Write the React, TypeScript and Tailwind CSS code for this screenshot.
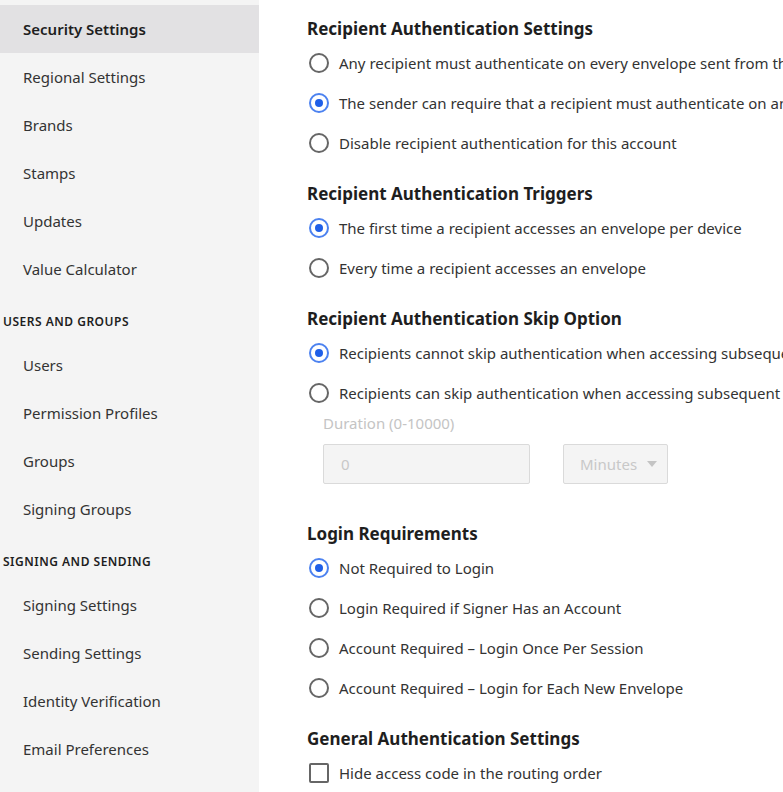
import React from 'react';

type NavEntry = { label: string; header?: boolean; active?: boolean };

const nav: NavEntry[] = [
  { label: 'Security Settings', active: true },
  { label: 'Regional Settings' },
  { label: 'Brands' },
  { label: 'Stamps' },
  { label: 'Updates' },
  { label: 'Value Calculator' },
  { label: 'USERS AND GROUPS', header: true },
  { label: 'Users' },
  { label: 'Permission Profiles' },
  { label: 'Groups' },
  { label: 'Signing Groups' },
  { label: 'SIGNING AND SENDING', header: true },
  { label: 'Signing Settings' },
  { label: 'Sending Settings' },
  { label: 'Identity Verification' },
  { label: 'Email Preferences' },
  { label: 'Security Transfer' },
];

const Radio: React.FC<{ checked?: boolean; label: string }> = ({ checked, label }) => (
  <div className="flex items-center h-10">
    <span
      className={
        checked
          ? 'ml-[2px] w-5 h-5 rounded-full border-2 border-[#4c82f0] flex items-center justify-center shrink-0'
          : 'ml-[2px] w-5 h-5 rounded-full border-2 border-[#666666] shrink-0'
      }
    >
      {checked && <span className="w-2 h-2 rounded-full bg-[#1f5fe8]" />}
    </span>
    <span className="ml-[10px] whitespace-nowrap">{label}</span>
  </div>
);

const Heading: React.FC<{ children: React.ReactNode }> = ({ children }) => (
  <h2 className="text-[17px] font-bold text-[#1e1e1e] h-[29px] leading-[29px] whitespace-nowrap">{children}</h2>
);

export default function App() {
  return (
    <div
      className="flex w-[783px] h-[792px] overflow-hidden bg-white text-[#2b2b2b]"
      style={{ fontFamily: '"Noto Sans", sans-serif' }}
    >
      {/* Sidebar */}
      <aside className="w-[259px] shrink-0 bg-[#f4f4f4] pt-[5px]">
        {nav.map((n) =>
          n.header ? (
            <div
              key={n.label}
              className="h-12 pt-5 pl-[3px] text-[12px] font-semibold tracking-[0.5px] text-[#1e1e1e]"
            >
              {n.label}
            </div>
          ) : (
            <div
              key={n.label}
              className={
                n.active
                  ? 'h-12 flex items-center pl-[23px] text-[15px] font-semibold text-[#1e1e1e] bg-[#e2e1e3]'
                  : 'h-12 flex items-center pl-[23px] text-[15px] text-[#333333]'
              }
            >
              {n.label}
            </div>
          )
        )}
      </aside>

      {/* Main */}
      <main className="flex-1 min-w-0 pl-[48px] pt-[14px] text-[15px] text-[#333333]">
        <Heading>Recipient Authentication Settings</Heading>
        <Radio label="Any recipient must authenticate on every envelope sent from this account" />
        <Radio checked label="The sender can require that a recipient must authenticate on an envelope" />
        <Radio label="Disable recipient authentication for this account" />

        <div className="mt-4">
          <Heading>Recipient Authentication Triggers</Heading>
        </div>
        <Radio checked label="The first time a recipient accesses an envelope per device" />
        <Radio label="Every time a recipient accesses an envelope" />

        <div className="mt-4">
          <Heading>Recipient Authentication Skip Option</Heading>
        </div>
        <Radio checked label="Recipients cannot skip authentication when accessing subsequent envelopes" />
        <Radio label="Recipients can skip authentication when accessing subsequent envelopes" />

        <div className="pl-4">
          <div className="text-[15px] text-[#c4c4c4] h-5 leading-5">Duration (0-10000)</div>
          <div className="flex items-center gap-[33px] mt-[11px]">
            <div className="w-[207px] h-10 border border-[#dadada] bg-[#f4f4f4] rounded-[2px] flex items-center pl-[17px] text-[#c8c8c8]">
              0
            </div>
            <div className="w-[105px] h-10 border border-[#dadada] bg-[#f4f4f4] rounded-[2px] flex items-center pl-4 text-[#c8c8c8]">
              Minutes
              <svg className="ml-[10px]" width="10" height="6" viewBox="0 0 10 6">
                <path d="M0 0h10L5 6z" fill="#c4c4c4" />
              </svg>
            </div>
          </div>
        </div>

        <div className="mt-[35px]">
          <Heading>Login Requirements</Heading>
        </div>
        <Radio checked label="Not Required to Login" />
        <Radio label="Login Required if Signer Has an Account" />
        <Radio label="Account Required – Login Once Per Session" />
        <Radio label="Account Required – Login for Each New Envelope" />

        <div className="mt-4">
          <Heading>General Authentication Settings</Heading>
        </div>
        <div className="flex items-center h-10">
          <span className="ml-[2px] w-5 h-5 rounded-[2px] border-2 border-[#666666] shrink-0" />
          <span className="ml-[10px] whitespace-nowrap">Hide access code in the routing order</span>
        </div>
      </main>
    </div>
  );
}
